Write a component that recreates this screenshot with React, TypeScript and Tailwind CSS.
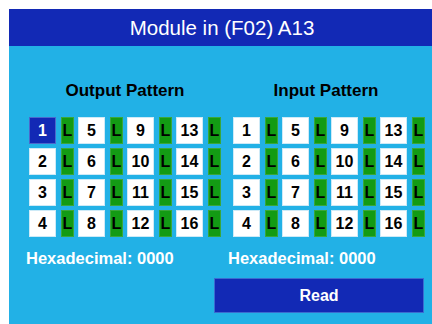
const font = { fontFamily: '"Liberation Sans", Arial, sans-serif' };

const Cell = ({ n, active }: { n: number; active?: boolean }) => (
  <div className="flex gap-[5px]">
    <div
      className={
        active
          ? "w-[27px] h-[27px] flex items-center justify-center bg-[#1229b5] border border-[#4a68cc] text-white text-[16px] font-bold"
          : "w-[27px] h-[27px] flex items-center justify-center bg-white border border-[#cdeaf7] text-black text-[16px] font-bold"
      }
    >
      {n}
    </div>
    <div className="w-[13px] h-[27px] flex items-center justify-center bg-[#139b14] border border-[#3aa63a] text-black text-[16px] font-bold">
      L
    </div>
  </div>
);

const Pattern = ({ title, first }: { title: string; first?: boolean }) => {
  const rows = [0, 1, 2, 3];
  return (
    <div className="flex flex-col w-[192px]">
      <h2
        className={
          first
            ? "text-center text-[17px] leading-[18px] font-bold text-black"
            : "text-center text-[17px] leading-[18px] font-bold text-black pr-[6px]"
        }
      >
        {title}
      </h2>
      <div className="mt-[17px] flex flex-col gap-[4px]">
        {rows.map((r) => (
          <div key={r} className="flex gap-[4px]">
            {[1, 5, 9, 13].map((c) => (
              <Cell key={c} n={c + r} active={first && c + r === 1} />
            ))}
          </div>
        ))}
      </div>
    </div>
  );
};

export default function App() {
  return (
    <div className="w-[432px] h-[324px] bg-white pt-[9px] pl-[9px]" style={font}>
      <div className="w-[423px] h-[315px] bg-[#22b1e6] flex flex-col">
        <div className="h-[37px] bg-[#1229b5] flex items-center justify-center">
          <h1 className="text-white text-[20.5px] leading-[24px] pl-[3px]">Module in (F02) A13</h1>
        </div>

        <div className="pt-[36px] pl-[20px] flex gap-[12px]">
          <Pattern title="Output Pattern" first />
          <Pattern title="Input Pattern" />
        </div>

        <div className="mt-[12px] flex text-white text-[16.5px] leading-[18px] font-bold">
          <div className="ml-[17px] w-[202px]">Hexadecimal: 0000</div>
          <div>Hexadecimal: 0000</div>
        </div>

        <div className="mt-[11px] ml-[205px]">
          <button className="w-[210px] h-[35px] bg-[#1229b5] border border-[#3a6cd0] text-white text-[16px] font-bold">
            Read
          </button>
        </div>
      </div>
    </div>
  );
}
